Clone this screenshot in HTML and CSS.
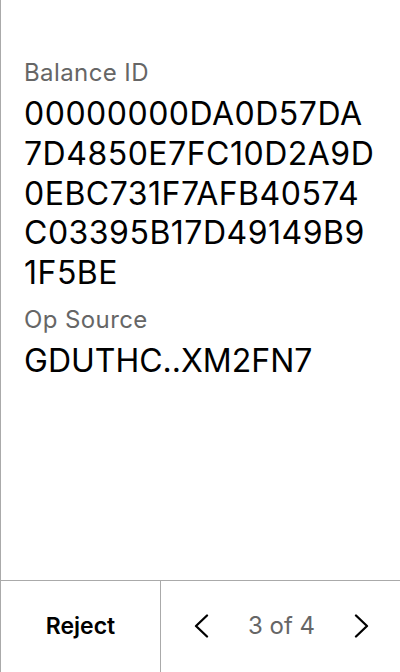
FILE: index.html
```html
<!DOCTYPE html>
<html>
<head>
<meta charset="utf-8">
<link rel="stylesheet" href="styles.css">
</head>
<body>
<div class="screen">
  <main class="content">
    <div class="field">
      <div class="label">Balance ID</div>
      <div class="value hex"><span class="line">00000000DA0D57DA</span><span class="line">7D4850E7FC10D2A9D</span><span class="line">0EBC731F7AFB40574</span><span class="line">C03395B17D49149B9</span><span class="line">1F5BE</span></div>
    </div>
    <div class="field">
      <div class="label">Op Source</div>
      <div class="value">GDUTHC..XM2FN7</div>
    </div>
  </main>
  <footer class="footer">
    <div class="reject">Reject</div>
    <div class="pager">
      <svg class="chev" width="16" height="24" viewBox="0 0 16 24"><path d="M14 1.5 L3 12 L14 22.5" fill="none" stroke="#000" stroke-width="2.3" stroke-linecap="round" stroke-linejoin="round"/></svg>
      <span class="count">3 of 4</span>
      <svg class="chev" width="16" height="24" viewBox="0 0 16 24"><path d="M2 1.5 L13 12 L2 22.5" fill="none" stroke="#000" stroke-width="2.3" stroke-linecap="round" stroke-linejoin="round"/></svg>
    </div>
  </footer>
</div>
</body>
</html>
```
FILE: styles.css
```css
html, body {
  margin: 0;
  padding: 0;
  background: #fff;
}
.screen {
  width: 400px;
  height: 672px;
  box-sizing: border-box;
  border-left: 1px solid #aaa;
  display: flex;
  flex-direction: column;
  font-family: Inter, "Noto Sans", sans-serif;
  color: #000;
}
.content {
  flex: 1;
  padding: 58px 10px 0 23px;
}
.field {
  display: flex;
  flex-direction: column;
}
.label {
  font-size: 24px;
  line-height: 30px;
  letter-spacing: 0.4px;
  color: #666;
}
.value {
  font-size: 32px;
  line-height: 39.75px;
  margin-top: 6px;
  margin-bottom: 12px;
  white-space: nowrap;
}
.hex {
  letter-spacing: 0.5px;
}
.line {
  display: block;
}
.footer {
  height: 91px;
  border-top: 1px solid #aaa;
  display: flex;
}
.reject {
  width: 159px;
  border-right: 1px solid #aaa;
  display: flex;
  align-items: center;
  justify-content: center;
  font-size: 23px;
  font-weight: 600;
  padding-bottom: 2px;
}
.pager {
  flex: 1;
  display: flex;
  align-items: center;
  justify-content: space-between;
  padding: 0 30px 2px 32px;
}
.count {
  font-size: 24px;
  color: #666;
}
```
